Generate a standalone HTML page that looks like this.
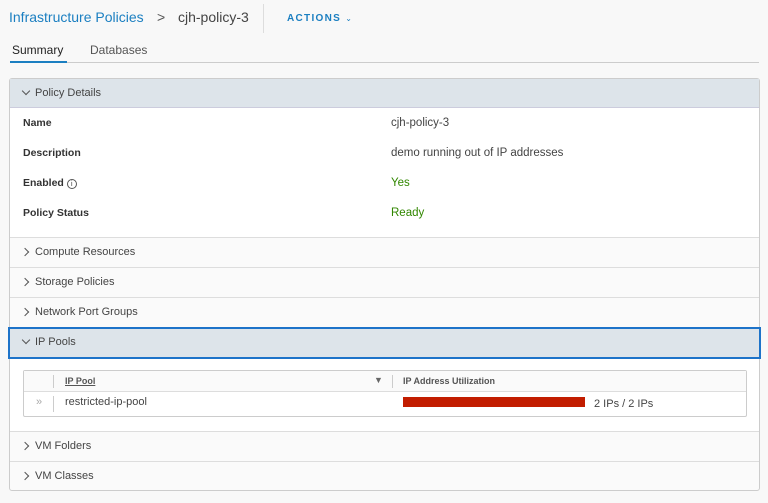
<!DOCTYPE html>
<html><head><style>
*{box-sizing:border-box;margin:0;padding:0}
body{width:768px;height:503px;background:#f8f8f8;font-family:"Liberation Sans",sans-serif;color:#333;position:relative;overflow:hidden;font-size:11px}
.a{position:absolute}
.hdr{top:78px;left:9px;width:751px;height:413px;border:1px solid #ccc;border-radius:3px;background:#fafafa}
.sec{position:absolute;left:0;width:749px;height:30px;border-top:1px solid #ddd;line-height:29px;padding-left:25px;font-size:11px;color:#444}
.chev{position:absolute;left:12px;top:11px;width:6px;height:6px;border-right:1px solid #555;border-bottom:1px solid #555;transform:rotate(-45deg)}
.chevd{position:absolute;left:13px;top:9px;width:6px;height:6px;border-right:1px solid #555;border-bottom:1px solid #555;transform:rotate(45deg)}
.lbl{position:absolute;left:13px;font-weight:bold;font-size:10.5px;color:#333}
.val{position:absolute;left:381px;font-size:11.5px;color:#444}
</style></head><body>
<div class="a" style="left:9px;top:9px;font-size:14px;color:#1b7fc1">Infrastructure Policies</div>
<div class="a" style="left:157px;top:9px;font-size:14px;color:#555">&gt;</div>
<div class="a" style="left:178px;top:9px;font-size:14px;color:#444">cjh-policy-3</div>
<div class="a" style="left:263px;top:4px;width:1px;height:29px;background:#ddd"></div>
<div class="a" style="left:287px;top:13px;font-size:10px;font-weight:bold;letter-spacing:1.3px;color:#1b7fc1">ACTIONS <span style="font-weight:normal;font-size:8px">&#8964;</span></div>
<div class="a" style="left:12px;top:43px;font-size:12px;color:#222">Summary</div>
<div class="a" style="left:90px;top:43px;font-size:12px;color:#555">Databases</div>
<div class="a" style="left:10px;top:62px;width:749px;height:1px;background:#ccc"></div>
<div class="a" style="left:10px;top:61px;width:57px;height:2px;background:#1b7fc1"></div>
<div class="a hdr">
 <div class="sec" style="top:0;border-top:none;height:29px;background:#dde4ea;border-bottom:1px solid #ccd"><div class="chevd"></div>Policy Details</div>
 <div class="a" style="left:0;top:29px;width:749px;height:129px;background:#fff"></div>
 <div class="lbl" style="top:38px">Name</div><div class="val" style="top:38px">cjh-policy-3</div>
 <div class="lbl" style="top:68px">Description</div><div class="val" style="top:68px">demo running out of IP addresses</div>
 <div class="lbl" style="top:98px">Enabled <span style="display:inline-block;width:10px;height:10px;border:1px solid #555;border-radius:50%;font-size:7px;text-align:center;line-height:9px;font-weight:normal">i</span></div><div class="val" style="top:98px;color:#318700">Yes</div>
 <div class="lbl" style="top:128px">Policy Status</div><div class="val" style="top:128px;color:#318700">Ready</div>
 <div class="sec" style="top:158px"><div class="chev"></div>Compute Resources</div>
 <div class="sec" style="top:188px"><div class="chev"></div>Storage Policies</div>
 <div class="sec" style="top:218px"><div class="chev"></div>Network Port Groups</div>
 <div class="sec" style="top:248px;height:32px;left:-2px;width:753px;background:#dde4ea;border:2px solid #1d73c9;padding-left:25px;line-height:27px"><div class="chevd" style="left:13px;top:8px"></div>IP Pools</div>
 <div class="a" style="left:0;top:280px;width:749px;height:72px;background:#fff"></div>
 <div class="a" style="left:13px;top:291px;width:724px;height:47px;border:1px solid #ccc;border-radius:2px;background:#fff">
  <div class="a" style="left:0;top:0;width:722px;height:21px;background:#fafafa;border-bottom:1px solid #ddd"></div>
  <div class="a" style="left:29px;top:4px;width:1px;height:13px;background:#ccc"></div>
  <div class="a" style="left:29px;top:25px;width:1px;height:16px;background:#ccc"></div>
  <div class="a" style="left:41px;top:5px;font-size:9px;font-weight:bold;color:#555;text-decoration:underline">IP Pool</div>
  <div class="a" style="left:350px;top:4px;font-size:9px;color:#666">&#9660;</div>
  <div class="a" style="left:368px;top:4px;width:1px;height:13px;background:#ccc"></div>
  <div class="a" style="left:379px;top:5px;font-size:9px;font-weight:bold;color:#555">IP Address Utilization</div>
  <div class="a" style="left:12px;top:25px;font-size:11px;color:#aaa">&#187;</div>
  <div class="a" style="left:41px;top:25px;font-size:11px;color:#444">restricted-ip-pool</div>
  <div class="a" style="left:379px;top:26px;width:182px;height:10px;background:#c21d00"></div>
  <div class="a" style="left:570px;top:27px;font-size:11px;color:#444">2 IPs / 2 IPs</div>
 </div>
 <div class="sec" style="top:352px"><div class="chev"></div>VM Folders</div>
 <div class="sec" style="top:382px"><div class="chev"></div>VM Classes</div>
</div>
</body></html>
